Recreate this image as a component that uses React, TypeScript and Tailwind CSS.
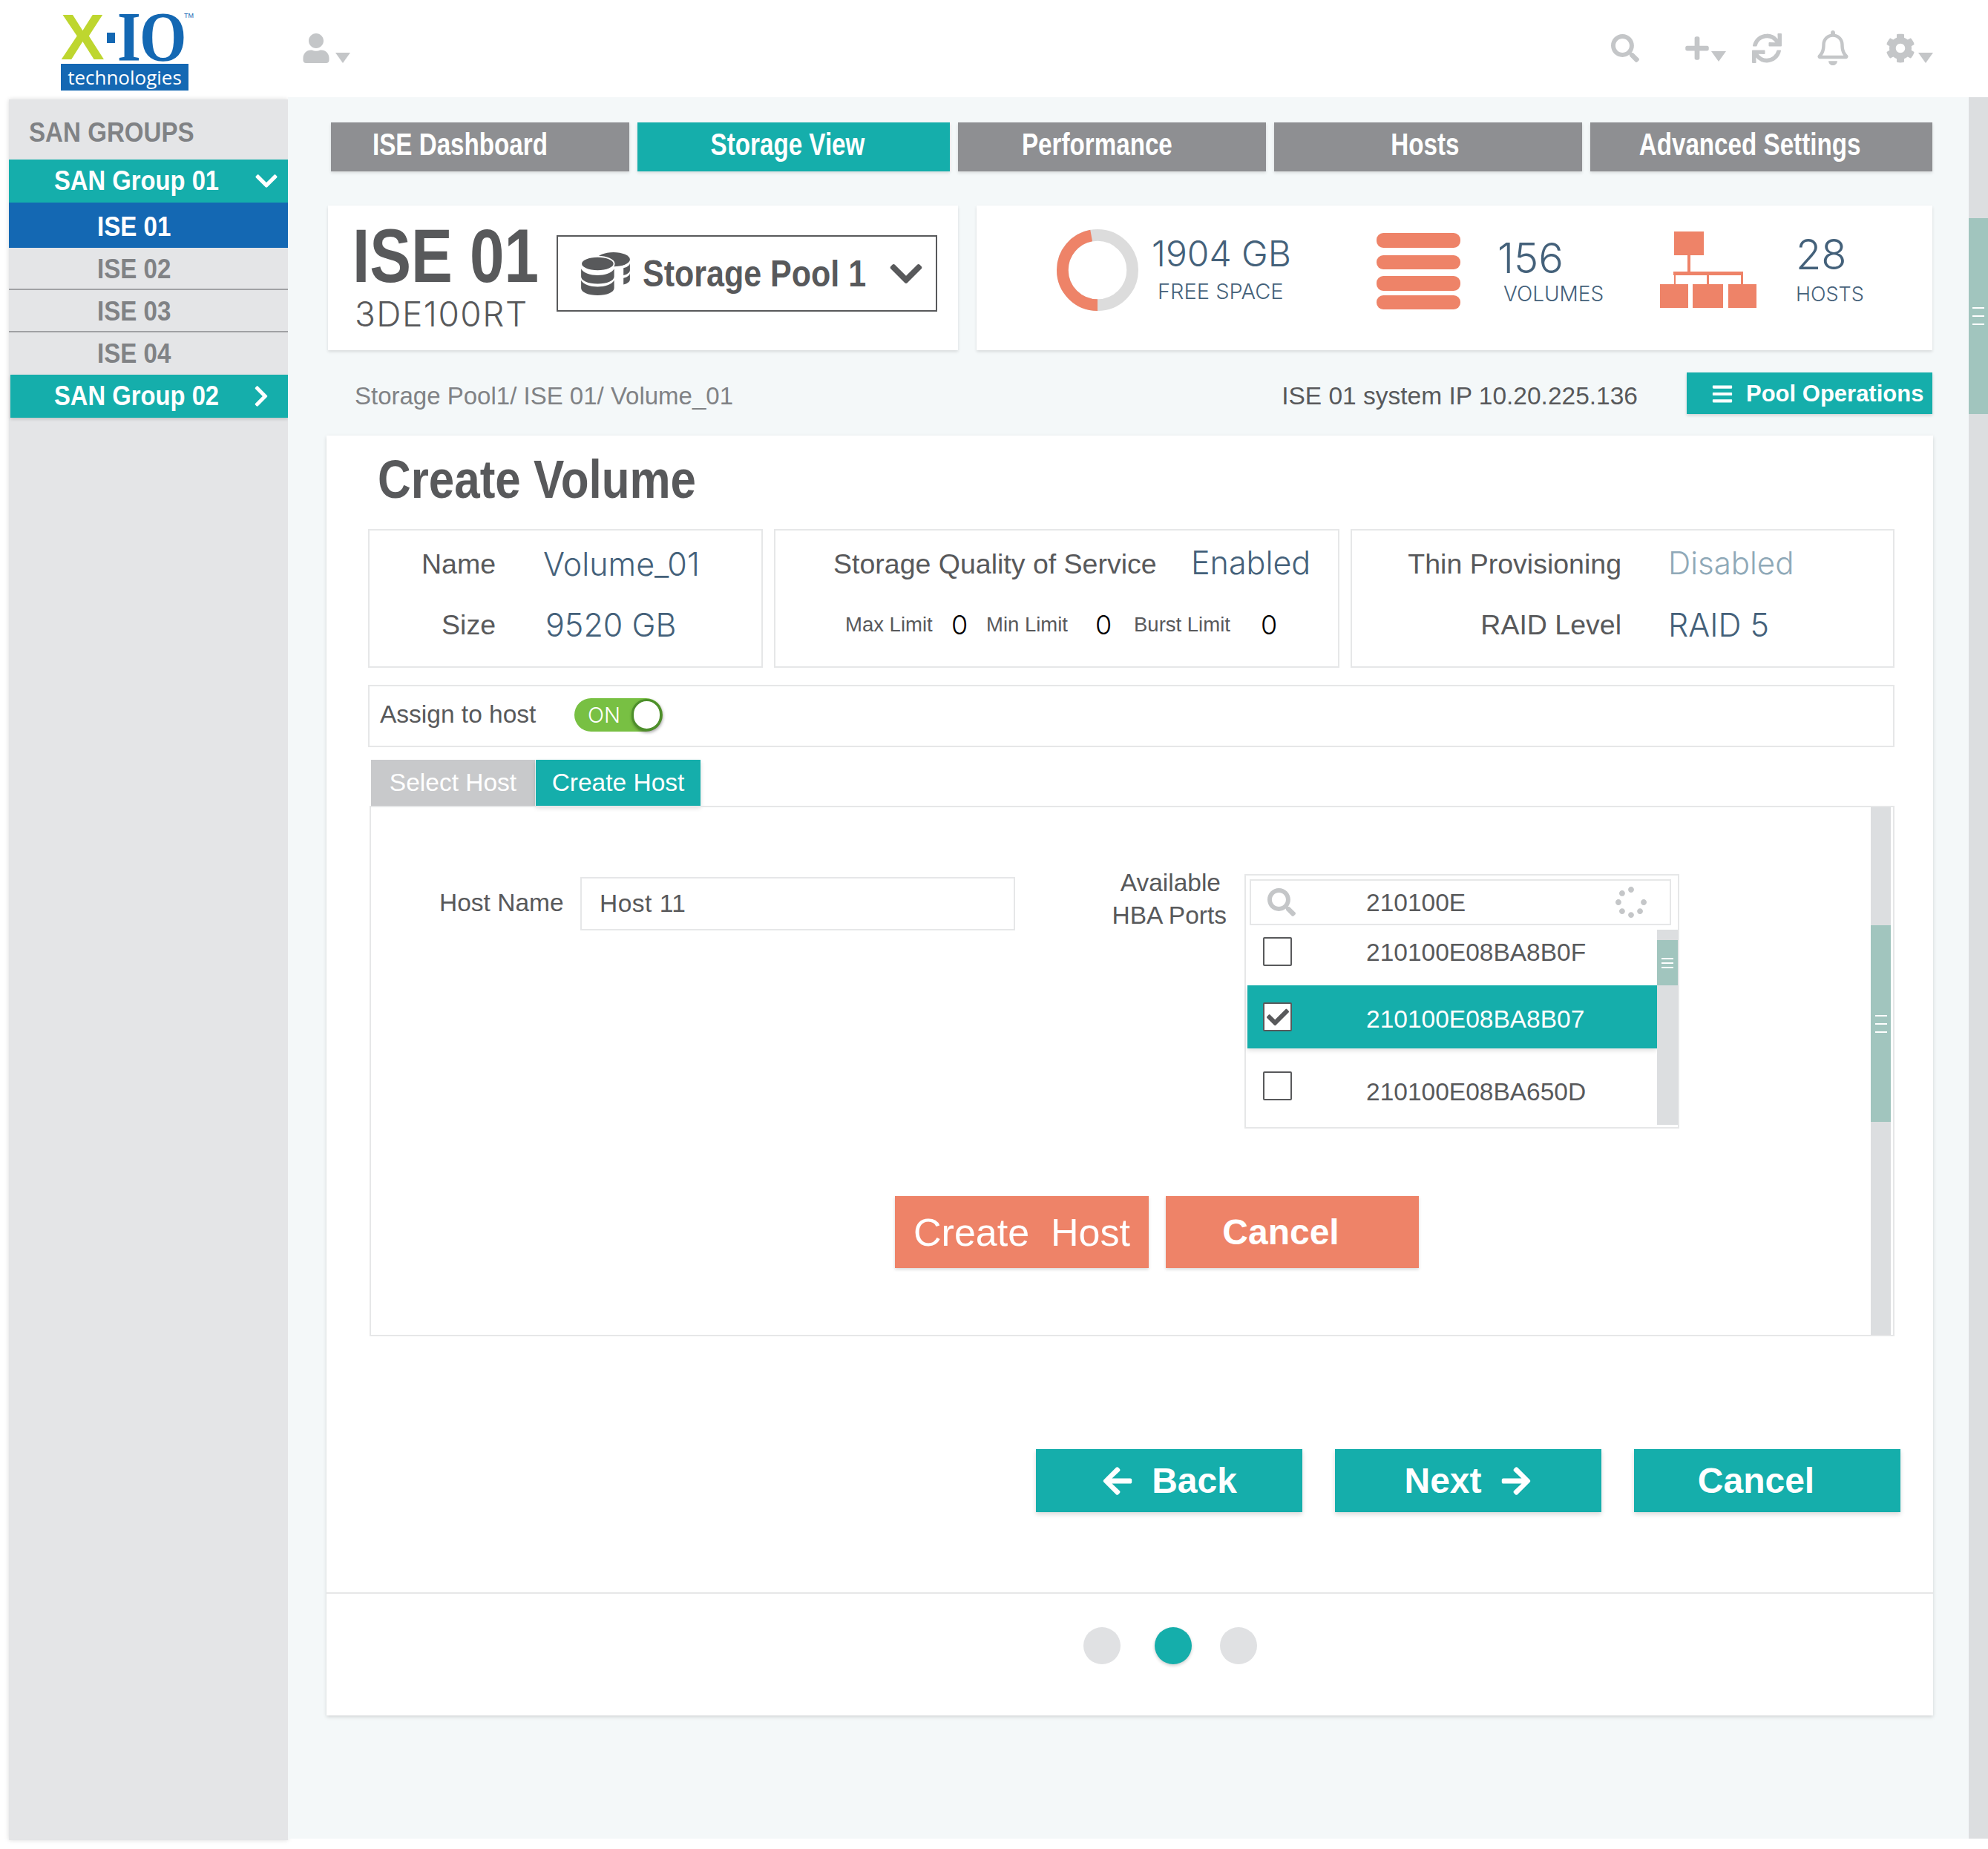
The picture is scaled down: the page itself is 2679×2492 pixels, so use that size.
import {
  FaArrowLeft,
  FaArrowRight,
  FaBars,
  FaCheck,
  FaChevronDown,
  FaChevronRight,
  FaCog,
  FaPlus,
  FaRegBell,
  FaSearch,
  FaSpinner,
  FaSync,
  FaUser,
} from "react-icons/fa";

const sans = "font-['Liberation_Sans',sans-serif]";
const light = "font-['Inter',sans-serif] font-light";
// condensed look: no narrow face is installed, so squeeze the bold one
const squeeze = "inline-block whitespace-nowrap origin-left";

function Caret() {
  return <span className="h-0 w-0 border-x-[10px] border-t-[14px] border-x-transparent border-t-[#c4c6c8]" />;
}

function Logo() {
  return (
    <div className="relative ml-[82px] mt-[18px] flex h-[104px] w-[172px] flex-col">
      <div className="flex h-[64px] items-center text-[#1468b3]">
        <span className={`${sans} w-[61px] shrink-0 text-[88px] leading-[64px] font-bold text-[#bed62f]`}>X</span>
        <span className="ml-[1px] mr-[3px] mt-[2px] h-[14px] w-[11px] shrink-0 bg-[#1468b3]" />
        <span className={`${squeeze} shrink-0 scale-x-[.85] font-['Liberation_Serif',serif] text-[96px] leading-[64px] font-bold tracking-[-2px]`}>
          IO
        </span>
      </div>
      <div className="mt-[4px] flex h-[36px] items-center justify-center bg-[#1468b3] font-['Open_Sans',sans-serif] text-[26px] leading-none text-white">
        technologies
      </div>
      <span className={`${sans} absolute -right-[7px] -top-[3px] text-[9px] leading-[12px] text-[#1468b3]`}>TM</span>
    </div>
  );
}

function Header() {
  return (
    <div className="flex h-[131px] items-start bg-white">
      <Logo />
      <div className="ml-[153px] mt-[45px] flex items-end gap-[7px] text-[#c4c6c8]">
        <FaUser className="h-[40px] w-[38px]" />
        <Caret />
      </div>
      <div className="ml-auto mr-[74px] mt-[41px] flex h-[47px] items-center text-[#c4c6c8]">
        <FaSearch className="h-[38px] w-[38px]" />
        <div className="ml-[60px] flex items-end gap-[1px]">
          <FaPlus className="h-[36px] w-[36px]" />
          <Caret />
        </div>
        <FaSync className="ml-[35px] h-[40px] w-[40px]" />
        <FaRegBell className="ml-[48px] h-[47px] w-[42px]" />
        <div className="ml-[50px] flex items-end gap-[4px]">
          <FaCog className="h-[40px] w-[40px]" />
          <Caret />
        </div>
      </div>
    </div>
  );
}

function SidebarGroup({ label, open }: { label: string; open?: boolean }) {
  return (
    <div
      className={`flex h-[58px] items-center bg-[#15aeab] pr-[12px] text-[36px] font-bold text-white ${sans} ${
        open ? "pl-[61px]" : "ml-[2px] pl-[59px] shadow-[0_2px_4px_rgba(0,0,0,0.15)]"
      }`}
    >
      <span className={`${squeeze} scale-x-[.91]`}>{label}</span>
      {open ? (
        <FaChevronDown className="ml-auto h-[34px] w-[34px]" />
      ) : (
        <FaChevronRight className="ml-auto mr-[8px] h-[32px] w-[32px]" />
      )}
    </div>
  );
}

function Sidebar() {
  return (
    <div className="mb-[-2px] ml-[12px] mt-[3px] w-[376px] bg-[#e4e5e7] shadow-[0_0_6px_rgba(0,0,0,0.15)]">
      <div className={`flex h-[81px] items-center pl-[27px] pt-[8px] text-[36px] font-bold text-[#808285] ${sans}`}>
        <span className={`${squeeze} scale-x-[.92]`}>SAN GROUPS</span>
      </div>
      <SidebarGroup label="SAN Group 01" open />
      <div className={`flex h-[61px] items-center bg-[#1468b3] pl-[119px] pt-[4px] text-[36px] font-bold text-white ${sans}`}>
        <span className={`${squeeze} scale-x-[.92]`}>ISE 01</span>
      </div>
      {["ISE 02", "ISE 03", "ISE 04"].map((name, i) => (
        <div
          key={name}
          className={`flex h-[57px] items-center pl-[119px] text-[36px] font-bold text-[#808285] ${sans} ${
            i < 2 ? "border-b-2 border-[#a0a1a4] pt-[2px]" : ""
          }`}
        >
          <span className={`${squeeze} scale-x-[.92]`}>{name}</span>
        </div>
      ))}
      <SidebarGroup label="SAN Group 02" />
    </div>
  );
}

function NavTab({ label, w, active, left }: { label: string; w: string; active?: boolean; left?: boolean }) {
  return (
    <div
      className={`flex h-[66px] items-center pb-[7px] text-[42px] font-bold text-white shadow-[0_2px_4px_rgba(0,0,0,0.12)] ${sans} ${w} ${
        active ? "bg-[#15aeab]" : "bg-[#8e8f92]"
      } ${left ? "pl-[56px]" : "justify-center"}`}
    >
      <span className={`inline-block whitespace-nowrap scale-x-[.79] ${left ? "origin-left" : "origin-center"}`}>{label}</span>
    </div>
  );
}

function PoolCard() {
  return (
    <div className="ml-[54px] flex h-[195px] w-[849px] bg-white pl-[35px] shadow-[0_2px_4px_rgba(0,0,0,0.12)]">
      <div className="w-[273px]">
        <div className={`-ml-[2px] mt-[18px] h-[100px] text-[102px] leading-[100px] font-bold text-[#58595b] ${sans}`}>
          <span className={`${squeeze} scale-x-[.82]`}>ISE 01</span>
        </div>
        <div className={`ml-[1px] mt-[3px] text-[46px] leading-[50px] tracking-[1.5px] text-[#58595b] ${light}`}>3DE100RT</div>
      </div>
      <div className="mt-[40px] flex h-[103px] w-[513px] items-center border-2 border-[#58595b] pl-[30px]">
        <svg viewBox="0 0 70 62" className="h-[60px] w-[68px] fill-[#58595b]">
          <ellipse cx="46" cy="11" rx="23" ry="10" />
          <path d="M60 23c5-1 9-4 9-7v10c0 3-4 6-9 7z" />
          <path d="M60 37c5-1 9-4 9-7v9c0 3-4 6-9 7z" />
          <ellipse cx="24" cy="17" rx="23" ry="10" stroke="#fff" strokeWidth="2" />
          <path d="M1 24c3 6 13 9 23 9s20-3 23-9v11c0 6-10 10-23 10S1 41 1 35z" />
          <path d="M1 40c3 6 13 9 23 9s20-3 23-9v11c0 6-10 10-23 10S1 57 1 51z" />
        </svg>
        <span className={`ml-[16px] mt-[2px] w-[300px] text-[50px] font-bold text-[#58595b] ${sans}`}>
          <span className={`${squeeze} scale-x-[.86]`}>Storage Pool 1</span>
        </span>
        <FaChevronDown className="ml-auto mr-[15px] h-[50px] w-[50px] text-[#58595b]" />
      </div>
    </div>
  );
}

function StatsCard() {
  return (
    <div className="ml-[25px] flex h-[195px] w-[1288px] bg-white shadow-[0_2px_4px_rgba(0,0,0,0.12)]">
      {/* free space donut */}
      <svg viewBox="0 0 112 112" className="ml-[107px] mt-[32px] h-[110px] w-[112px]">
        <circle cx="56" cy="56" r="48" fill="none" stroke="#dcdcdc" strokeWidth="16" />
        <circle
          cx="56"
          cy="56"
          r="48"
          fill="none"
          stroke="#ee8368"
          strokeWidth="16"
          strokeDasharray="142 302"
          transform="rotate(90 56 56)"
        />
      </svg>
      <div className="ml-[17px] mt-[35px] flex w-[190px] flex-col whitespace-nowrap">
        <span className={`text-[48px] leading-[60px] text-[#44617a] ${light}`}>1904 GB</span>
        <span className={`ml-[8px] mt-[3px] text-[29px] leading-[36px] text-[#44617a] ${light}`}>FREE SPACE</span>
      </div>
      <div className="ml-[113px] mt-[37px] flex h-[103px] w-[113px] flex-col">
        <div className="h-[20px] rounded-[9px] bg-[#ee8368]" />
        <div className="mt-[10px] h-[20px] rounded-[9px] bg-[#ee8368]" />
        <div className="mt-[9px] h-[20px] rounded-[9px] bg-[#ee8368]" />
        <div className="mt-[6px] h-[20px] rounded-[9px] bg-[#ee8368]" />
      </div>
      <div className="ml-[50px] mt-[41px] flex w-[142px] flex-col whitespace-nowrap">
        <span className={`text-[56px] leading-[60px] text-[#44617a] ${light}`}>156</span>
        <span className={`ml-[8px] text-[28px] leading-[36px] text-[#44617a] ${light}`}>VOLUMES</span>
      </div>
      {/* hosts tree */}
      <svg viewBox="0 0 130 103" className="ml-[77px] mt-[35px] h-[103px] w-[130px] fill-[#ee8368]">
        <rect x="19" y="0" width="40" height="32" />
        <rect x="37" y="32" width="4" height="24" />
        <rect x="18" y="54" width="94" height="5" />
        <rect x="19" y="58" width="2" height="14" />
        <rect x="63" y="58" width="3" height="14" />
        <rect x="109" y="58" width="3" height="14" />
        <rect x="0" y="71" width="38" height="32" />
        <rect x="44" y="71" width="41" height="32" />
        <rect x="92" y="71" width="38" height="32" />
      </svg>
      <div className="ml-[53px] mt-[36px] flex flex-col whitespace-nowrap">
        <span className={`text-[56px] leading-[60px] text-[#44617a] ${light}`}>28</span>
        <span className={`mt-[6px] text-[27px] leading-[36px] text-[#44617a] ${light}`}>HOSTS</span>
      </div>
    </div>
  );
}

function InfoBoxes() {
  const label = `text-[37.5px] text-[#58595b] whitespace-nowrap ${sans}`;
  const value = `text-[43px] text-[#44617a] whitespace-nowrap ${light}`;
  const zero = `text-[36px] text-black ${light}`;
  return (
    <div className="ml-[56px] flex h-[187px] gap-[15px]">
      <div className="grid w-[532px] grid-cols-[170px_1fr] grid-rows-[82px_82px] items-center gap-x-[64px] border-2 border-[#e6e7e8] pt-[4px]">
        <span className={`${label} text-right`}>Name</span>
        <span className={value}>Volume_01</span>
        <span className={`${label} text-right`}>Size</span>
        <span className={`${value} ml-[3px]`}>9520 GB</span>
      </div>
      <div className="flex w-[762px] flex-col border-2 border-[#e6e7e8] pt-[4px]">
        <div className="ml-[78px] flex h-[82px] items-center">
          <span className={`${label} w-[434px]`}>Storage Quality of Service</span>
          <span className={`${value} -mt-[3px] ml-[48px] text-[42px]`}>Enabled</span>
        </div>
        <div className={`ml-[94px] flex h-[82px] items-center text-[27.5px] whitespace-nowrap text-[#58595b] ${sans}`}>
          <span className="w-[143px]">Max Limit</span>
          <span className={`${zero} w-[47px]`}>0</span>
          <span className="w-[147px]">Min Limit</span>
          <span className={`${zero} w-[52px]`}>0</span>
          <span className="w-[171px]">Burst Limit</span>
          <span className={zero}>0</span>
        </div>
      </div>
      <div className="grid w-[733px] grid-cols-[363px_1fr] grid-rows-[82px_82px] items-center gap-x-[63px] border-2 border-[#e6e7e8] pt-[4px]">
        <span className={`${label} text-right`}>Thin Provisioning</span>
        <span className={`-mt-[3px] text-[42px] text-[#8fa9b8] ${light}`}>Disabled</span>
        <span className={`${label} text-right`}>RAID Level</span>
        <span className={value}>RAID 5</span>
      </div>
    </div>
  );
}

function Checkbox({ checked }: { checked?: boolean }) {
  return (
    <div className="flex h-[39px] w-[39px] shrink-0 items-center justify-center rounded-[2px] border-2 border-[#58595b] bg-white">
      {checked && <FaCheck className="h-[30px] w-[30px] text-[#58595b]" />}
    </div>
  );
}

function PortList() {
  return (
    <div className="ml-[24px] flex h-[343px] w-[586px] flex-col border-2 border-[#e6e7e8] pt-[5px]">
      <div className={`ml-[5px] mr-[9px] flex h-[62px] items-center border-2 border-[#e6e7e8] pl-[22px] pr-[31px] text-[33.5px] text-[#58595b] ${sans}`}>
        <FaSearch className="h-[38px] w-[38px] text-[#c4c6c8]" />
        <span className="ml-[95px] mt-[3px]">210100E</span>
        <FaSpinner className="ml-auto h-[42px] w-[42px] text-[#c4c6c8]" />
      </div>
      <div className="mt-[6px] flex min-h-0 flex-1 pl-[2px]">
        <div className={`w-[552px] text-[33.5px] text-[#58595b] ${sans}`}>
          <div className="flex h-[75px] items-start pl-[21px] pt-[10px]">
            <Checkbox />
            <span className="ml-[100px] leading-[42px]">210100E08BA8B0F</span>
          </div>
          <div className="flex h-[85px] items-center bg-[#15aeab] pl-[21px] text-white shadow-[0_3px_6px_rgba(0,0,0,0.12)]">
            <Checkbox checked />
            <span className="ml-[100px] mt-[7px]">210100E08BA8B07</span>
          </div>
          <div className="flex h-[90px] items-start pl-[21px] pt-[31px]">
            <Checkbox />
            <span className="ml-[100px] mt-[7px] leading-[42px]">210100E08BA650D</span>
          </div>
        </div>
        <div className="mb-[3px] flex w-[28px] flex-col bg-[#dcdee0] pt-[14px]">
          <div className="flex h-[61px] flex-col items-center justify-center gap-[4px] bg-[#a1c5be]">
            <span className="h-[2px] w-[16px] bg-white" />
            <span className="h-[2px] w-[16px] bg-white" />
            <span className="h-[2px] w-[16px] bg-white" />
          </div>
        </div>
      </div>
    </div>
  );
}

function HostPanel() {
  return (
    <div className="ml-[2px] flex h-[715px] w-[2055px] border-2 border-[#e6e7e8]">
      <div className="flex flex-1 flex-col">
        <div className="mt-[90px] flex items-start">
          <span className={`ml-[92px] mt-[18px] w-[166px] text-right text-[33.5px] leading-[42px] whitespace-nowrap text-[#58595b] ${sans}`}>
            Host Name
          </span>
          <div className={`ml-[24px] mt-[4px] flex h-[72px] w-[586px] items-center border-2 border-[#e6e7e8] pl-[24px] text-[33.5px] tracking-[.5px] text-[#58595b] ${sans}`}>
            Host 11
          </div>
          <div className={`-mt-[10px] ml-[120px] w-[165px] text-right text-[33.5px] leading-[44px] whitespace-nowrap text-[#58595b] ${sans}`}>
            <span className="mr-[8px]">Available</span>
            <br />
            HBA Ports
          </div>
          <PortList />
        </div>
        <div className="ml-[706px] mt-[91px] flex gap-[23px]">
          <div className={`flex h-[97px] w-[342px] items-center justify-center bg-[#ee8368] text-[52px] whitespace-pre text-white shadow-[0_2px_4px_rgba(0,0,0,0.15)] ${sans}`}>
            Create  Host
          </div>
          <div className={`flex h-[97px] w-[341px] items-center justify-center bg-[#ee8368] pr-[31px] text-[48px] font-bold text-white shadow-[0_2px_4px_rgba(0,0,0,0.15)] ${sans}`}>
            Cancel
          </div>
        </div>
      </div>
      <div className="mr-[3px] flex w-[27px] flex-col bg-[#dcdee0] pt-[159px]">
        <div className="flex h-[265px] flex-col items-center justify-center gap-[9px] bg-[#a1c5be]">
          <span className="h-[2px] w-[16px] bg-white" />
          <span className="h-[2px] w-[16px] bg-white" />
          <span className="h-[2px] w-[16px] bg-white" />
        </div>
      </div>
    </div>
  );
}

function MainCard() {
  const btn = `flex h-[85px] w-[359px] items-center justify-center gap-[24px] bg-[#15aeab] text-[48px] font-bold text-white shadow-[0_3px_6px_rgba(0,0,0,0.15)] ${sans}`;
  return (
    <div className="ml-[52px] mt-[29px] flex h-[1725px] w-[2165px] flex-col bg-white shadow-[0_2px_5px_rgba(0,0,0,0.15)]">
      <div className={`flex h-[126px] items-center pb-[8px] pl-[69px] text-[72px] font-bold text-[#58595b] ${sans}`}>
        <span className={`${squeeze} scale-x-[.86]`}>Create Volume</span>
      </div>
      <InfoBoxes />
      <div className={`ml-[56px] mt-[23px] flex h-[84px] w-[2057px] items-center border-2 border-[#e6e7e8] pb-[3px] pl-[14px] text-[33.5px] text-[#58595b] ${sans}`}>
        <span className="w-[210px] whitespace-nowrap">Assign to host</span>
        <div className="ml-[52px] flex h-[45px] w-[119px] items-center rounded-full bg-[#78c043] pl-[18px] pr-[1px]">
          <span className={`text-[29px] text-white ${light}`}>ON</span>
          <span className="ml-auto h-[43px] w-[41px] rounded-full border-[3px] border-[#4d8f2b] bg-white shadow-[1px_2px_4px_rgba(0,0,0,0.4)]" />
        </div>
      </div>
      <div className={`ml-[60px] mt-[17px] flex h-[62px] text-[33.5px] text-white ${sans}`}>
        <div className="flex w-[221px] items-center justify-center bg-[#c8c9cb]">Select Host</div>
        <div className="ml-[1px] flex w-[222px] items-center justify-center bg-[#15aeab] shadow-[0_3px_6px_rgba(0,0,0,0.15)]">
          Create Host
        </div>
      </div>
      <div className="ml-[56px]">
        <HostPanel />
      </div>
      <div className="ml-[956px] mt-[152px] flex gap-[44px]">
        <div className={btn}>
          <FaArrowLeft className="h-[44px] w-[44px]" />
          Back
        </div>
        <div className={btn}>
          Next
          <FaArrowRight className="h-[44px] w-[44px]" />
        </div>
        <div className={`${btn} pr-[30px]`}>Cancel</div>
      </div>
      <div className="mt-[108px] flex h-[166px] items-center border-t-2 border-[#e6e7e8] pb-[24px] pl-[1020px]">
        <span className="h-[50px] w-[50px] rounded-full bg-[#e0e1e3]" />
        <span className="ml-[46px] h-[50px] w-[50px] rounded-full bg-[#15aeab] shadow-[0_2px_4px_rgba(0,0,0,0.2)]" />
        <span className="ml-[38px] h-[50px] w-[50px] rounded-full bg-[#e0e1e3]" />
      </div>
    </div>
  );
}

export default function App() {
  return (
    <div className="flex h-[2492px] w-[2679px] flex-col bg-white">
      <Header />
      <div className="flex h-[2347px]">
        <Sidebar />
        <div className="flex w-[2265px] flex-col bg-[#f4f8f9]">
          <div className="ml-[58px] mt-[34px] flex gap-[11px]">
            <NavTab label="ISE Dashboard" w="w-[402px]" left />
            <NavTab label="Storage View" w="w-[421px] pr-[16px]" active />
            <NavTab label="Performance" w="w-[415px] pr-[40px]" />
            <NavTab label="Hosts" w="w-[415px] pr-[8px]" />
            <NavTab label="Advanced Settings" w="w-[461px] pr-[30px]" />
          </div>
          <div className="mt-[46px] flex">
            <PoolCard />
            <StatsCard />
          </div>
          <div className={`mt-[30px] flex h-[56px] items-center text-[33.5px] whitespace-nowrap ${sans}`}>
            <span className="ml-[90px] mt-[8px] text-[33px] text-[#808285]">Storage Pool1/ ISE 01/ Volume_01</span>
            <span className="ml-auto mt-[8px] text-[#58595b]">ISE 01 system IP 10.20.225.136</span>
            <div className="ml-[66px] mr-[49px] flex h-[56px] w-[331px] shrink-0 items-center bg-[#15aeab] pl-[33px] pt-[2px] text-[31px] font-bold text-white shadow-[0_2px_4px_rgba(0,0,0,0.15)]">
              <FaBars className="mr-[17px] h-[30px] w-[30px]" />
              Pool Operations
            </div>
          </div>
          <MainCard />
        </div>
        <div className="flex w-[26px] flex-col bg-[#dcdee0] pt-[163px]">
          <div className="flex h-[264px] flex-col items-center justify-center gap-[9px] bg-[#a1c5be]">
            <span className="h-[2px] w-[16px] bg-white" />
            <span className="h-[2px] w-[16px] bg-white" />
            <span className="h-[2px] w-[16px] bg-white" />
          </div>
        </div>
      </div>
    </div>
  );
}
